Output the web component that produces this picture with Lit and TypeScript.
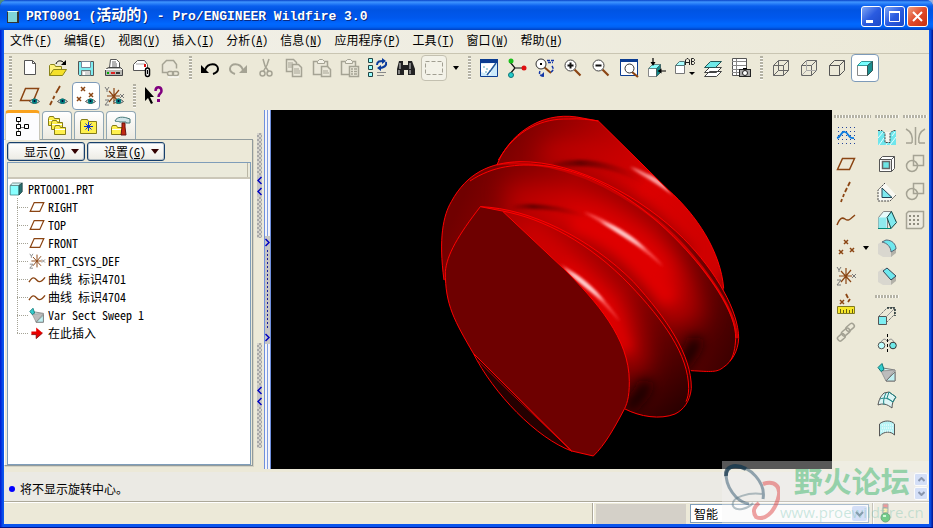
import { LitElement, html, svg, css, TemplateResult, SVGTemplateResult } from "lit";
import { customElement, state } from "lit/decorators.js";
import { classMap } from "lit/directives/class-map.js";

type Tool = { id: string; label: string; off?: boolean };

const B = "#8b4513";
const G = "#a5a394";
const K = "#555";

const eye = svg`<path d="M9.5 15.5q5-5 10 0q-5 4-10 0z" fill="#dfe8e8" stroke="#555"/><circle cx="14.5" cy="15.2" r="2.6" fill="#008080"/><circle cx="14.5" cy="15" r="1" fill="#003"/>`;
const cube = (c: string) => svg`<path d="M2.500 7.500h10v10h-10zM2.500 7.500l5-5h10l-5 5M17.500 2.500v10l-5 5" fill="none" stroke="${c}"/>`;
const axes = (c: string) => svg`<path d="M10 2v16M3 10h13M5 5l10 11M15 4L5 16" stroke="${c}" stroke-width="1.200" fill="none"/><path d="M1 1l2 3 2-3M3 4v2M16 8l4 4m0-4l-4 4M1 14h4l-4 5h4" stroke="#777" fill="none"/>`;
const cross = (x: number, y: number, c = B) => svg`<path d="M${x - 2} ${y - 2}l4 4m0-4l-4 4" stroke="${c}" stroke-width="1.500" fill="none"/>`;
const folder = (x: number, y: number) => svg`<path d="M${x}.5 ${y}.5v-7l1-2h4l1 2h5v7z" fill="#fff04d" stroke="#857c18"/><path d="M${x + 1} ${y - 5}.5h10" stroke="#fff"/>`;
const magnifier = (sign: string) => svg`<path d="M11.500 11.500l6 6" stroke="#8b4513" stroke-width="2.200"/><circle cx="7.500" cy="7.500" r="5.500" fill="#fff" stroke="#444"/><path d="${sign}" stroke="#111" stroke-width="2"/>`;
const clip = svg`<path d="M1.500 3.500h14v13h-14z" fill="#ebe8da" stroke="${G}" stroke-width="1.500"/><path d="M5.500 5.500v-2l2-2h3l2 2v2z" fill="#f4f2e8" stroke="${G}"/>`;

const icons: Record<string, SVGTemplateResult> = {
  new: svg`<path d="M4.500 2.500h8l3 3v11h-11z" fill="#fff" stroke="${K}"/><path d="M12.500 2.500v3h3" fill="none" stroke="${K}"/>`,
  open: svg`<path d="M1.500 17.500v-10l1-1h4l1 2h6v4" fill="#fff27a" stroke="#8a8418"/><path d="M1.500 17.500l4-6h13l-4 6z" fill="#f5e02a" stroke="#8a8418"/><path d="M8 6c1-4 6-4 8-1" stroke="#000" fill="none"/><path d="M18 2v5h-5z"/>`,
  save: svg`<path d="M2.500 3.500h15v14h-14l-1-1z" fill="#7eeef2" stroke="${K}"/><path d="M5.500 3.500h9v6h-9z" fill="#fff" stroke="#789"/><path d="M5.500 12.500h9v5h-9z" fill="#d4d4d4" stroke="#677"/><path d="M7 14h2v3H7z" fill="#fff"/>`,
  print: svg`<path d="M5.500 9.500l1-8h6l3 3v5z" fill="#fff" stroke="${K}"/><path d="M8 4h4M8 6h5M8 8h5" stroke="#666"/><path d="M1.500 11.500l3-2h12l2 2v6h-17z" fill="#b9b9b4" stroke="#444"/><path d="M1 11.500h17" stroke="#fff"/><path d="M3 14h2v2H3z" fill="#0a0"/><path d="M7 14h4v2H7z" fill="#d22"/><path d="M12 14h4v2h-4z" fill="#333"/>`,
  mail: svg`<path d="M1.500 12.500v-6l4-4h7l3 4v6z" fill="#fff" stroke="#555"/><path d="M4 6h9" stroke="#aaa"/><path d="M12 6h2v3h-2z" fill="#d11"/><rect x="13.500" y="10" width="4" height="8.500" rx="2" fill="#fff" stroke="#000" stroke-width="1.500"/><path d="M15.500 12v4" stroke="#000"/>`,
  maillink: svg`<path d="M7 14.500H2.500v-8l4-4h7l3 4v4" fill="#ebe8da" stroke="${G}" stroke-width="1.500"/><rect x="7.500" y="13.500" width="6" height="4" rx="2" fill="none" stroke="${G}" stroke-width="1.500"/><rect x="12.500" y="13.500" width="6" height="4" rx="2" fill="none" stroke="${G}" stroke-width="1.500"/><path d="M8 19h11" stroke="#fff"/>`,
  undo: svg`<path d="M5 12c3-8 13-7 13-1c0 2-2 4-5 5" fill="none" stroke="#000" stroke-width="2"/><path d="M1 7v8h8z"/>`,
  redo: svg`<path d="M15 12C12 4 2 5 2 11c0 2 2 4 5 5" fill="none" stroke="${G}" stroke-width="2"/><path d="M19 7v8h-8z" fill="${G}"/>`,
  cut: svg`<path d="M7 1l2 7 4 6M13 1l-2 6-4 7" stroke="${G}" stroke-width="1.500" fill="none"/><circle cx="6.500" cy="15.500" r="2.500" fill="none" stroke="${G}" stroke-width="1.500"/><circle cx="13.500" cy="15.500" r="2.500" fill="none" stroke="${G}" stroke-width="1.500"/>`,
  copy: svg`<path d="M2.500 1.500h7l3 3v9h-10z" fill="#ebe8da" stroke="${G}" stroke-width="1.500"/><path d="M4 5h5M4 7h6M4 9h4" stroke="${G}"/><path d="M8.500 6.500h6l3 3v9h-9z" fill="#ebe8da" stroke="${G}" stroke-width="1.500"/><path d="M10 11h5M10 13h6M10 15h6" stroke="${G}"/>`,
  paste: svg`${clip}<path d="M9.500 8.500h6l3 3v7h-9z" fill="#ebe8da" stroke="${G}" stroke-width="1.500"/><path d="M11 13h5M11 15h6" stroke="${G}"/>`,
  pastespecial: svg`${clip}<path d="M9.500 8.500h9v10h-9z" fill="#ebe8da" stroke="${G}" stroke-width="1.500"/><path d="M11 11h2M14 11h3M11 13.500h2M14 13.500h3M11 16h2M14 16h3" stroke="${G}" stroke-width="1.500"/>`,
  regen: svg`<path d="M.5.500h4v4h-4zM.5 7.500h4v4h-4zM.5 14.500h4v4h-4z" fill="#9ff" stroke="#244"/><path d="M9 7c0-4 3-4 6-4M18 4c1 4-2 5-5 6" stroke="#0a3b9c" stroke-width="2" fill="none"/><path d="M14 0l4 3-4 3zM13 7v6l-4-3z" fill="#0a3b9c"/><path d="M9 14.500h9M9 17.500h7" stroke="#888"/>`,
  find: svg`<path d="M3 3h4v4h5V3h4l3 8v6h-7v-5H8v5H1v-6z" fill="#222"/><path d="M4 5v6M14 5v6M3 12v4M14 12v4" stroke="#ddd"/>`,
  select: svg`<path d="M1.500 3.500h17v13h-17z" fill="none" stroke="#a19f92" stroke-dasharray="4 2"/>`,
  repaint: svg`<path d="M1.500 1.500h17v17h-17z" fill="#cdebfb" stroke="#0b3c91"/><path d="M1 1h18v4H1z" fill="#0b3c91"/><path d="M2 6l14-1-5 12-9-3z" fill="#fff"/><path d="M4 9h2M7 11h2M6 14h2M10 13h2" stroke="#5ab"/><path d="M8 17l4-5 5-7" stroke="#245a9c" stroke-width="1.500" fill="none"/>`,
  spin: svg`<path d="M3 4l5 6-5 6M8 10h9" fill="none" stroke="#111" stroke-width="1.200"/><circle cx="4" cy="3" r="2.500" fill="#1bbf1b"/><circle cx="4" cy="17" r="2.500" fill="#2cc" stroke="#177"/><circle cx="17" cy="10" r="2.500" fill="#e01010"/>`,
  orientmode: svg`<path d="M9 9l7 6" stroke="${B}" stroke-width="2"/><circle cx="6" cy="6" r="5" fill="#fff" stroke="#333"/><path d="M5 5h2v2H5z"/><path d="M12 2.500h7M13 4.500h5M5 13c-2 4 2 5 4 5M17 8c2 3 1 5-1 6" stroke="#1236a8" stroke-width="1.500" fill="none" stroke-dasharray="3 1"/><path d="M9 14v5l-4-1z" fill="#1236a8"/>`,
  zoomin: magnifier("M4.500 7.500h6M7.500 4.500v6"),
  zoomout: magnifier("M4.500 7.500h6"),
  refit: svg`<path d="M1.500 1.500h17v16h-17z" fill="#fff" stroke="#0b3c91"/><path d="M1 1h18v3H1z" fill="#0b3c91"/><path d="M13 14l6 5" stroke="${B}" stroke-width="2.200"/><circle cx="10.500" cy="10.500" r="4.500" fill="#fff" stroke="#333"/>`,
  orient: svg`<path d="M1.500 10.500h8v8h-8z" fill="#fff" stroke="#888"/><path d="M1.500 10.500l4-4h8l-4 4z" fill="#8ff" stroke="#688"/><path d="M9.500 10.500l4-4v8l-4 4z" fill="#188" stroke="#466"/><path d="M6 0v6M19 13h-6" stroke="#000" stroke-width="1.200"/><path d="M3.500 4h5L6 8zM14.500 10.500v5l-4-2.500z"/>`,
  views: svg`<path d="M.5 7.500h9v8h-9z" fill="#fff" stroke="#777"/><path d="M.5 7.500l4-4h5v4z" fill="#aff" stroke="#577"/><path d="M10.500 7V2l1.500-1.500h1L14.500 2v5M10.500 4.500h4M16.500.500v6h2l1-1v-1l-1-1h-2M16.500.500h2l1 1v1l-1 1" stroke="#222" fill="none"/><path d="M14 14h6l-3 3z"/>`,
  layers: svg`<path d="M1.500 18.500l5-5h12l-5 5zM1.500 14.500l5-5h12l-5 5z" fill="#fff" stroke="#444"/><path d="M1.500 9.500l6-6h11l-6 6z" fill="#6ee8e8" stroke="#255"/>`,
  viewmgr: svg`<path d="M1.500.500h14v17h-14z" fill="#fff" stroke="#555"/><path d="M1 3.500h14M1 7.500h14M1 11.500h8M1 14.500h7M5.500 1v16" stroke="#888"/><rect x="8.500" y="11.500" width="11" height="7" fill="#aaa" stroke="#222"/><circle cx="14" cy="15" r="2.500" fill="#fff" stroke="#222"/><path d="M12 10h4v1h-4z"/>`,
  wire: svg`${cube("#666")}<path d="M7.500 2.500v10h10M2.500 17.500l5-5" fill="none" stroke="#666"/>`,
  hidden: svg`${cube("#666")}<path d="M7.500 2.500v10h10M2.500 17.500l5-5" fill="none" stroke="#aaa"/>`,
  nohidden: cube("#555"),
  shaded: svg`<path d="M2.500 7.500h10v10h-10z" fill="#fff" stroke="#888"/><path d="M2.500 7.500l4-4h11l-5 4z" fill="#7ff" stroke="#399"/><path d="M12.500 7.500l5-4v9l-5 5z" fill="#1a8f8f" stroke="#355"/>`,
  planeEye: svg`<path d="M5.500 2.500h13l-5 12h-13z" fill="none" stroke="${B}" stroke-width="1.500"/>${eye}`,
  axisEye: svg`<path d="M12 0L8 7M6.500 10L5 13M4 15l-2 4" fill="none" stroke="${B}" stroke-width="1.800"/>${eye}`,
  pointEye: svg`${cross(7, 3)}${cross(15, 9)}${cross(3, 13)}${eye}`,
  csysEye: svg`${axes(B)}${eye}`,
  help: svg`<path d="M1 1v14l3-3 3 6 2-1-3-6h4z"/><path d="M11.500 5c0-5 6-5 6 0c0 3-3 2-3 6" fill="none" stroke="#800080" stroke-width="2.500"/><path d="M13 13h3v3h-3z" fill="#800080"/>`,
  modeltree: svg`<path d="M5.500 4v12M5 10.500h8" stroke="#777"/><path d="M3.500.500h4v4h-4zM3.500 7.500h4v4h-4zM3.500 14.500h4v4h-4zM11.500 7.500h4v4h-4z" fill="#fff" stroke="#000"/>`,
  folders: svg`${folder(1, 9)}${folder(4, 13)}${folder(7, 18)}`,
  favorite: svg`<path d="M1.500 17.500v-12l1-2h6l1 2h8v12z" fill="#fff04d" stroke="#857c18"/><path d="M9.500 6v9M5 10.500h9M6.500 7.500l6 6m0-6l-6 6" stroke="#0a2fd0"/>`,
  tools: svg`${folder(0, 18)}<path d="M4 5c2-5 9-4 12-3l3 1v4h-4v-1H9c-2-1-3 0-5-1z" fill="#cfe4e8" stroke="#477"/><path d="M11 7h3v4l1 8h-5l1-8z" fill="#c32a12" stroke="#611"/>`,
  root: svg`<path d="M1.500 5.500h11v12h-11z" fill="#8ff" stroke="#488"/><path d="M1.500 5.500l3-3h12l-4 3z" fill="#dff" stroke="#577"/><path d="M12.500 5.500l4-3v11l-4 4z" fill="#276f70" stroke="#244"/>`,
  plane: svg`<path d="M6.500 4.500h12l-5 11h-12z" fill="none" stroke="${B}" stroke-width="1.500"/>`,
  csys: axes(B),
  curve: svg`<path d="M0 14c6-11 9-2 12-1c2 1 5-1 8-5" fill="none" stroke="${B}" stroke-width="1.800"/>`,
  sweep: svg`<path d="M6 6l12 2v11H9z" fill="#d9f4f4" stroke="#777"/><path d="M4 9l5 10 9-11z" fill="#bcbcbc" stroke="#999"/><path d="M9 19l9-9v9z" fill="#bff0f2" stroke="#777"/><path d="M1 5.500l4-4 2 6-3 2z" fill="#3cc" stroke="#177"/>`,
  insert: svg`<path d="M3 8h6V3l8 7-8 7v-5H3z" fill="#e80000"/><path d="M3 12h6v5l8-7" fill="none" stroke="#700"/>`,
  sketch: svg`<path d="M2 1.500h18M2 5.500h18M2 9.500h18M2 13.500h18M2 17.500h18" stroke="#24459b" stroke-dasharray="1 3"/><path d="M1 12c5-1 4-8 8-6c4 1 3 7 9 6" stroke="#0a7be0" stroke-width="1.800" fill="none"/>`,
  axis: svg`<path d="M14 0l-2 4M11 6L9 10M8 12l-1 3M6 17l-1 3" stroke="${B}" stroke-width="1.800" fill="none"/>`,
  bigcurve: svg`<path d="M1 15c3-7 5-8 8-6c4 3 6-1 10-4" fill="none" stroke="${B}" stroke-width="1.500"/>`,
  points: svg`${cross(10, 4)}${cross(5, 14)}${cross(16, 12)}`,
  measure: svg`${cross(6, 8)}<path d="M10 0l2 4M14 5l-2 3" stroke="${B}" stroke-width="1.800"/><path d="M1.500 12.500h17v7h-17z" fill="#f8e82a" stroke="#827a20"/><path d="M4.500 15v4M7.500 16v3M10.500 15v4M13.500 16v3M16.500 15v4" stroke="#665f10"/>`,
  chain: svg`<g fill="none" stroke="#a3a193" stroke-width="1.500"><rect x="10" y="3" width="9" height="5" rx="2" transform="rotate(-40 14 6)"/><rect x="5" y="8" width="9" height="5" rx="2" transform="rotate(-40 9 10)"/><rect x="1" y="13" width="8" height="5" rx="2" transform="rotate(-40 5 15)"/></g>`,
  hole: svg`<path d="M1 5h5l2 2v9h5V7l2-2h4v14H1z" fill="#6fe6ec"/><path d="M8 6h5v10H8z" fill="#f6f5ee"/><path d="M2 19l5-7M1 12l5-6M13 19l6-8M9 19l2-3M15 10l3-4" stroke="#e5ffff"/><path d="M1 4.500h4l3 3v9h5v-9l3-3h3" fill="none" stroke="#444" stroke-dasharray="2 1"/>`,
  shell: svg`<path d="M2.500 5.500l3-3h12v12l-3 3h-12z" fill="#fff" stroke="#555"/><path d="M14.500 5.500v12M2.500 5.500h12l3-3" fill="none" stroke="#555"/><path d="M5.500 7.500h7v7h-7z" fill="#6ee5e5" stroke="#666" stroke-width="1.500"/>`,
  rib: svg`<path d="M8 1L1 8v11h12l6-6" fill="#f8f8f2" stroke="#444" stroke-dasharray="2 1"/><path d="M5 6v9.500h10z" fill="#7de9ee" stroke="#245"/>`,
  draft: svg`<path d="M1.500 7.500l5-6h8l-4 6v11h-9z" fill="#e6fafa" stroke="#888"/><path d="M1.500 7.500h8v11h-8z" fill="#8feaee"/><path d="M14 18.500L10 7.500l4.500-6 5 11z" fill="#7fe9ee" stroke="#144"/><path d="M1 18.500h13" stroke="#087"/>`,
  round: svg`<path d="M1 6l5-3 5 5 4 4v7H6l-5-3z" fill="#d9d7cf"/><path d="M14 12l5-3v6l-5 4z" fill="#b3b1a8"/><path d="M5 4l4-2c6 0 10 4 10 9l-5 3C14 9 10 5 5 4z" fill="#6ee8ee" stroke="#567"/>`,
  chamfer: svg`<path d="M1 6l5-4 5 7 3 4v6H6l-5-3z" fill="#d9d7cf"/><path d="M14 13l5-4v6l-5 4z" fill="#b3b1a8"/><path d="M6 5l4-3 9 8-5 4z" fill="#6ee8ee" stroke="#345"/>`,
  extrude: svg`<path d="M1.500 10.500h8v8h-8z" fill="#7eeef2" stroke="#555"/><path d="M1.500 10.500l9-9h7v7l-8 8" fill="none" stroke="#777" stroke-dasharray="3 1"/><path d="M10 2h8v8" fill="none" stroke="#233" stroke-width="1.500" stroke-dasharray="2 1"/><path d="M9.500 10.500l8-8" stroke="#999"/>`,
  revolve: svg`<path d="M10.500 0v20" stroke="#000" stroke-dasharray="3 2"/><circle cx="4.500" cy="11.500" r="3.300" fill="#bff" stroke="#555"/><circle cx="16" cy="11.500" r="3.300" fill="#6ee8e8" stroke="#333"/><path d="M4 8c2-3 4-4 6-1M17 8c-2-3-3-4-6-1" fill="none" stroke="#888"/>`,
  boundary: svg`<path d="M1 15c1-6 3-9 6-12l5-1 7 5c-3 3-4 7-4 11-5-4-9-5-14-3z" fill="#ddf5f5" stroke="#555"/><path d="M3 9c5-2 9 0 13 3M9 3c-2 4-3 8-2 12M12 2l7 5-3 5-6-4z" fill="none" stroke="#288"/>`,
  style: svg`<path d="M2.500 6c4-4 12-4 15 0v11c-4-4-10-4-15 1z" fill="#b8f4f6" stroke="#555"/><path d="M5 7h11M5 10h11M4 13h12" stroke="#fff" stroke-dasharray="1 1"/>`,
  mirror: svg`<path d="M10.500 1v18M1 3c6 3 7 8 6 14M20 3c-6 3-7 8-6 14M1 17h6M14 17h6" stroke="${G}" fill="none" stroke-width="1.500"/>`,
  merge: svg`<path d="M8.500 1.500h10v10h-10z" fill="none" stroke="${G}" stroke-width="1.500"/><circle cx="7" cy="12" r="5.500" fill="none" stroke="${G}" stroke-width="1.500"/>`,
  pattern: svg`<path d="M1.500 3.500l2-2h15v15l-2 2h-15z" fill="#edeade" stroke="${G}" stroke-width="1.500"/><path d="M4 6h11M4 10h11M4 14h11" stroke="#8f8d80" stroke-width="2" stroke-dasharray="2 2"/>`,
};

const icon = (id: string): TemplateResult => html`<svg class="icon" viewBox="0 0 20 20" aria-hidden="true">${icons[id]}</svg>`;

const menus: [string, string][] = [
  ["文件", "F"], ["编辑", "E"], ["视图", "V"], ["插入", "I"], ["分析", "A"],
  ["信息", "N"], ["应用程序", "P"], ["工具", "T"], ["窗口", "W"], ["帮助", "H"],
];

const t = (id: string, label: string, off = false): Tool => ({ id, label, off });

const fileTools = [t("new", "新建"), t("open", "打开"), t("save", "保存"), t("print", "打印"), t("mail", "发送邮件"), t("maillink", "发送链接", true)];
const editTools = [t("undo", "撤消"), t("redo", "重做", true), t("cut", "剪切", true), t("copy", "复制", true), t("paste", "粘贴", true), t("pastespecial", "选择性粘贴", true), t("regen", "再生"), t("find", "查找")];
const viewTools = [t("repaint", "重画"), t("spin", "旋转中心"), t("orientmode", "定向模式"), t("zoomin", "放大"), t("zoomout", "缩小"), t("refit", "重新调整"), t("orient", "重定向"), t("views", "视图列表"), t("layers", "层"), t("viewmgr", "视图管理器")];
const displayTools = [t("wire", "线框"), t("hidden", "隐藏线"), t("nohidden", "无隐藏线"), t("shaded", "着色")];
const datumDisplay = [t("planeEye", "平面显示"), t("axisEye", "轴显示"), t("pointEye", "点显示"), t("csysEye", "坐标系显示")];
const datumTools = [t("sketch", "草绘"), t("plane", "基准平面"), t("axis", "基准轴"), t("bigcurve", "基准曲线"), t("points", "基准点"), t("csys", "坐标系"), t("measure", "分析"), t("chain", "参照", true)];
const engTools = [t("hole", "孔"), t("shell", "壳"), t("rib", "筋"), t("draft", "拔模"), t("round", "倒圆角"), t("chamfer", "倒角")];
const shapeTools = [t("extrude", "拉伸"), t("revolve", "旋转"), t("sweep", "可变剖面扫描"), t("boundary", "边界混合"), t("style", "造型")];
const changeTools = [t("mirror", "镜像", true), t("merge", "合并", true), t("merge", "修剪", true), t("pattern", "阵列", true)];
const tabs = [t("modeltree", "模型树"), t("folders", "文件夹浏览器"), t("favorite", "收藏夹"), t("tools", "连接")];

const features: [string, string][] = [
  ["plane", "RIGHT"], ["plane", "TOP"], ["plane", "FRONT"], ["csys", "PRT_CSYS_DEF"],
  ["curve", "曲线 标识4701"], ["curve", "曲线 标识4704"], ["sweep", "Var Sect Sweep 1"], ["insert", "在此插入"],
];

const backShape = "M200 182C235 90 330 20 440 36L505 48L715 255C800 330 872 440 881 550L860 720L500 500Z";
const middleShape = "M42 525C25 400 40 330 64 290C110 205 180 172 270 170C440 168 640 280 760 400C860 500 926 620 926 700C924 740 905 770 880 787C860 803 845 800 783 797L500 800Z";
const frontShape = "M151 305C300 310 480 400 610 530C710 640 785 750 784 850C780 890 760 915 735 927C690 945 630 935 585 912L300 700Z";
const faceShape = "M151 305L217 318L400 490C500 590 598 700 598 830C598 880 590 900 580 918C555 965 525 1020 490 1053L425 1038L130 745C75 650 45 600 46 500C50 450 85 390 151 305Z";

@customElement("app-root")
export class AppRoot extends LitElement {
  @state() private tab = "modeltree";
  @state() private display = "shaded";

  static styles = css`
    :host {
      display: block;
      font: 12px/18px "Noto Sans CJK SC", sans-serif;
      font-feature-settings: "hwid";
      color: #000;
      background: linear-gradient(90deg, #4f8c7c 50%, #9ab0e0 50%);
    }
    * { box-sizing: border-box; }
    button, select { font: inherit; font-feature-settings: inherit; color: inherit; }
    button { border: 0; background: none; padding: 0; white-space: nowrap; }
    ul { list-style: none; margin: 0; padding: 0; }
    .window {
      position: relative;
      min-height: 100vh;
      display: flex;
      flex-direction: column;
      border-radius: 7px 7px 0 0;
      overflow: hidden;
      background: linear-gradient(90deg, #0019cf, #0a55ee 3px, #0a55ee calc(100% - 3px), #00138c);
      border-bottom: 1px solid #00138c;
      padding: 0 4px 3px;
    }
    .title {
      display: flex;
      align-items: center;
      height: 30px;
      margin: 0 -4px;
      padding: 3px 5px 0 7px;
      gap: 2px;
      background: linear-gradient(#0842c8, #3f95ff 2px, #0a5fee 6px, #0054e3 10px, #0058ee 18px, #0068ff 24px, #0062f5 27px, #0040c0);
    }
    .title h1 {
      flex: 1;
      margin: 0;
      font: bold 13px/20px "Liberation Mono", "Noto Sans CJK SC", monospace;
      color: #fff;
      text-shadow: 1px 1px #0a2a80;
      white-space: nowrap;
    }
    .title .han { font-size: 15px; }
    .appicon { width: 12px; height: 12px; margin-right: 5px; background: #7fd4d8; border: 1px solid #333; border-right-width: 2px; border-top-color: #dff; }
    .cap { width: 21px; height: 21px; border: 1px solid #fff; border-radius: 3px; background: linear-gradient(135deg, #7fa6f5, #2a5be0 50%, #1c49c8); }
    .cap.close { background: linear-gradient(135deg, #f0a080, #e0492a 50%, #c83010); }
    .cap svg { display: block; width: 19px; height: 19px; }
    .menubar {
      display: flex;
      gap: 12px;
      height: 24px;
      padding: 1px 6px 4px;
      border-bottom: 1px solid #c9c5b2;
      background: linear-gradient(90deg, #f2f1ea, #ece9d8);
    }
    .bars { background: #ece9d8; }
    .bar { display: flex; height: 28px; align-items: center; }
    .grip { width: 12px; height: 24px; display: flex; justify-content: center; }
    .grip::before { content: ""; width: 3px; background: repeating-linear-gradient(#b4b2a4 0 2px, #fbfaf5 2px 3px); }
    .grip.wide { width: auto; height: 12px; align-items: center; margin: 0 2px; }
    .grip.wide::before { width: 100%; height: 3px; background: repeating-linear-gradient(90deg, #b4b2a4 0 2px, #fbfaf5 2px 3px); }
    .tool { width: 28px; height: 28px; display: grid; place-items: center; border-radius: 4px; border: 1px solid transparent; }
    .tool.on { background: #fff; border-color: #7d9ab8; }
    .tool.pick { width: 26px; height: 26px; margin: 0 1px; background: #f3f2e8; border-color: #c3c0b0; }
    .icon { width: 20px; height: 20px; display: block; overflow: visible; }
    .more { width: 15px; height: 28px; display: grid; place-items: center; }
    .more::before, .drop::after { content: ""; border: 3px solid transparent; border-top: 4px solid #000; border-bottom: 0; }
    .main { flex: 1; display: flex; background: #ece9d8; }
    .side { width: 249px; display: flex; flex-direction: column; }
    .tabs { display: flex; gap: 2px; height: 30px; align-items: flex-end; padding-left: 1px; position: relative; }
    .tab { width: 30px; height: 28px; display: grid; place-items: center; border: 1px solid #91a7b4; border-bottom: 0; border-radius: 4px 4px 0 0; background: linear-gradient(#fff, #eceae0); margin-bottom: 1px; }
    .tab.on { width: 35px; height: 30px; background: #fcfcfe; border-color: #c9c7ba; border-top: 3px solid #f9a21e; margin-bottom: 0; }
    .panel { flex: 1; display: flex; flex-direction: column; border: 1px solid #919b9c; border-left-color: #fff; padding: 2px 1px 0 2px; margin: -1px 0 3px; box-shadow: 1px 1px #d5d2c3; }
    .actions { display: flex; gap: 2px; padding-bottom: 1px; }
    .drop { width: 78px; height: 19px; display: flex; align-items: center; justify-content: flex-end; gap: 5px; padding: 0 5px; border: 1px solid #173f6b; outline: 1px solid #173f6b40; outline-offset: -2px; border-radius: 3px; background: linear-gradient(#fff, #ecebe4); }
    .drop::after { border-width: 4px; border-top-width: 5px; border-bottom-width: 0; border-top-color: #300; }
    .treebox { flex: 1; border: 1px solid #7f9db9; background: #fff; }
    .treehead { height: 16px; background: #ebeadb; border-bottom: 2px solid #cbc7b8; box-shadow: inset -2px 0 #ebeadb, inset -3px 0 #b9b6a5; }
    .tree { padding: 1px; }
    .row { display: flex; align-items: center; height: 18px; white-space: pre; }
    .row .icon { width: 16px; height: 16px; margin-right: 3px; }
    .branch { margin-left: 8px; }
    .branch .row::before { content: ""; width: 12px; height: 1px; background: repeating-linear-gradient(90deg, #a5a396 0 1px, transparent 1px 2px); }
    .branch { background: repeating-linear-gradient(#a5a396 0 1px, #fff 1px 2px) 0 0 / 1px calc(100% - 9px) no-repeat; }
    .sash { width: 18px; display: flex; }
    .tracks { width: 11px; display: flex; flex-direction: column; justify-content: space-between; padding: 23px 2px 21px 4px; }
    .track { height: 105px; display: flex; flex-direction: column; align-items: center; justify-content: center; background: repeating-conic-gradient(#a9a9a9 0 25%, #d6d4cc 0 50%) 0 0 / 4px 4px; }
    .chev { width: 5px; height: 11px; display: block; background: #c5c5c5; }
    .rail { width: 7px; display: flex; flex-direction: column; justify-content: center; border: solid #6f8fdc; border-width: 0 1px; background: linear-gradient(90deg, #f3f4fa 2px, #7f9ce0 2px 3px, #f3f4fa 3px); }
    .knob { height: 108px; display: flex; flex-direction: column; align-items: center; background: #c5c5c5; padding: 1px 0; }
    .dots { flex: 1; width: 1px; margin: 2px 0; background: repeating-linear-gradient(#1a1a9a 0 2px, transparent 2px 4px); }
    .canvas { flex: 1; min-width: 0; background: #000; display: flex; }
    .canvas svg { width: 100%; flex: 1; min-height: 359px; margin: auto; }
    .right { width: 97px; display: flex; align-items: flex-start; }
    .col { width: 28px; }
    .col.first { width: 41px; }
    .cell { display: flex; }
    .cell .more { width: 12px; }
    .message { display: flex; align-items: center; justify-content: space-between; height: 33px; border-top: 3px solid #ece9d8; border-bottom: 1px solid #aca899; background: #ebeae4; padding: 4px 1px 0 5px; }
    .message p { margin: 0; display: flex; align-items: center; gap: 5px; }
    .message p::before { content: ""; width: 6px; height: 6px; border-radius: 50%; background: #00f; }
    .spin { display: flex; flex-direction: column; gap: 1px; margin-top: -4px; }
    .step { width: 14px; height: 13px; display: grid; place-items: center; border: 1px solid #fff; border-radius: 2px; background: #c3d3f9; }
    .step svg { width: 7px; height: 5px; }
    .status { display: flex; height: 22px; border-top: 1px solid #fff; background: #ece9d8; }
    .status .rest { flex: 1; }
    .divider { width: 2px; background: #aca899; border-right: 1px solid #fff; margin-right: 2px; }
    .gray { width: 90px; background: #d4d0c8; margin: 1px 4px 0 0; }
    .filter { position: relative; width: 179px; height: 19px; margin: 1px 3px 0 0; }
    .filter select { appearance: none; width: 100%; height: 19px; border: 1px solid #7f9db9; border-radius: 0; background: #fff; padding: 0 3px; display: block; }
    .filter .arrow { position: absolute; right: 2px; top: 2px; width: 15px; height: 15px; border-radius: 2px; background: #c3d3f9; display: grid; place-items: center; pointer-events: none; }
    .filter .arrow svg { width: 9px; height: 6px; }
    .lamp { width: 53px; padding-left: 2px; }
    .lamp svg { width: 14px; height: 20px; display: block; }
    .brand { position: absolute; right: 4px; bottom: 3px; width: 207px; height: 63px; background: rgba(245, 245, 245, .36); pointer-events: none; display: flex; }
    .brand svg { width: 58px; height: 63px; }
    .words { display: flex; flex-direction: column; align-items: center; gap: 3px; }
    .name { font: bold 29px/38px "Noto Sans CJK SC", sans-serif; color: rgba(72, 185, 115, .55); white-space: nowrap; }
    .site { font: 15px/20px "Open Sans", sans-serif; font-feature-settings: normal; color: rgba(110, 190, 170, .35); }
  `;

  private tool = (x: Tool, on = false) => html`<button class=${classMap({ tool: true, on })} aria-label=${x.label} ?disabled=${x.off}>${icon(x.id)}</button>`;

  private drop(label: string, key: string) {
    return html`<button class="drop"><span>${label}(<u>${key}</u>)</span></button>`;
  }

  private model() {
    return html`<svg viewBox="0 0 561 359" role="img" aria-label="PRT0001">
      <defs>
        <clipPath id="cb"><path d=${backShape} /></clipPath>
        <clipPath id="cm"><path d=${middleShape} /></clipPath>
        <clipPath id="cf"><path d=${frontShape} /></clipPath>
        <filter id="wide" filterUnits="userSpaceOnUse" x="-100" y="-100" width="1200" height="1300"><feGaussianBlur stdDeviation="32" /></filter>
        <filter id="soft" filterUnits="userSpaceOnUse" x="-100" y="-100" width="1200" height="1300"><feGaussianBlur stdDeviation="18" /></filter>
        <filter id="fine" filterUnits="userSpaceOnUse" x="-100" y="-100" width="1200" height="1300"><feGaussianBlur stdDeviation="4" /></filter>
        <linearGradient id="gb" gradientUnits="userSpaceOnUse" x1="210" y1="130" x2="800" y2="450">
          <stop offset="0" stop-color="#780000" /><stop offset=".35" stop-color="#b00000" /><stop offset=".65" stop-color="#dc0000" /><stop offset="1" stop-color="#d00000" />
        </linearGradient>
        <linearGradient id="gm" gradientUnits="userSpaceOnUse" x1="50" y1="380" x2="900" y2="780">
          <stop offset="0" stop-color="#700000" /><stop offset=".3" stop-color="#a40000" /><stop offset=".6" stop-color="#940000" /><stop offset="1" stop-color="#3c0000" />
        </linearGradient>
        <linearGradient id="bm" gradientUnits="userSpaceOnUse" x1="180" y1="290" x2="790" y2="680">
          <stop offset="0" stop-color="#a80000" /><stop offset=".35" stop-color="#d80000" /><stop offset=".75" stop-color="#e40000" /><stop offset="1" stop-color="#900000" />
        </linearGradient>
        <linearGradient id="gf" gradientUnits="userSpaceOnUse" x1="250" y1="340" x2="720" y2="930">
          <stop offset="0" stop-color="#b00000" /><stop offset=".5" stop-color="#960000" /><stop offset="1" stop-color="#2c0000" />
        </linearGradient>
        <linearGradient id="bf" gradientUnits="userSpaceOnUse" x1="280" y1="360" x2="640" y2="840">
          <stop offset="0" stop-color="#c80000" /><stop offset=".6" stop-color="#e40000" /><stop offset="1" stop-color="#800000" />
        </linearGradient>
        <linearGradient id="edge" gradientUnits="userSpaceOnUse" x1="240" y1="0" x2="470" y2="0">
          <stop offset="0" stop-color="#500000" stop-opacity="0" /><stop offset=".3" stop-color="#500000" stop-opacity=".8" /><stop offset="1" stop-color="#800000" stop-opacity="0" />
        </linearGradient>
        <linearGradient id="edge2" gradientUnits="userSpaceOnUse" x1="370" y1="0" x2="640" y2="0">
          <stop offset="0" stop-color="#500000" stop-opacity=".3" /><stop offset=".3" stop-color="#500000" stop-opacity=".8" /><stop offset="1" stop-color="#800000" stop-opacity="0" />
        </linearGradient>
      </defs>
      <g transform="translate(159 -5) scale(.333333)" fill="none" stroke-linejoin="round">
        <path d=${backShape} fill="url(#gb)" />
        <g clip-path="url(#cb)">
          <path d="M340 150C450 120 560 150 640 210" stroke="#cc0000" stroke-width="40" filter="url(#wide)" />
          <path d="M370 182C470 162 560 180 650 235" stroke="url(#edge2)" stroke-width="18" filter="url(#fine)" />
          <path d="M380 225C520 220 640 290 780 450" stroke="#a40000" stroke-width="40" filter="url(#soft)" />
          <path d="M600 185C650 200 700 235 730 272C690 240 640 215 600 185Z" fill="#ff9a9a" filter="url(#fine)" />
          <path d="M650 208C680 220 705 240 722 262C695 240 670 225 650 208Z" fill="#ffd0d0" filter="url(#fine)" />
          <path d="M890 500C880 600 870 660 830 720" stroke="#900000" stroke-width="30" filter="url(#soft)" />
        </g>
        <path d="M200 182C235 90 330 20 440 36L505 48L715 255C800 330 872 440 881 550" stroke="#f00" stroke-width="3" />
        <path d="M205 165C260 70 340 40 415 42C450 40 480 44 505 48" stroke="#f00" stroke-width="3" />

        <path d=${middleShape} fill="url(#gm)" />
        <g clip-path="url(#cm)">
          <path d="M230 300C400 280 560 360 650 450C715 515 755 590 765 660" stroke="url(#bm)" stroke-width="130" filter="url(#wide)" />
          <path d="M430 350C540 380 640 460 720 590" stroke="#e00000" stroke-width="50" filter="url(#soft)" />
          <path d="M240 307C330 297 400 310 470 335" stroke="url(#edge)" stroke-width="14" filter="url(#fine)" />
          <path d="M800 700C790 735 770 765 745 790" stroke="#140000" stroke-width="34" filter="url(#soft)" />
          <path d="M460 320C540 345 630 400 700 485C620 415 550 375 460 320Z" fill="#ff5c5c" filter="url(#fine)" />
          <path d="M510 347C570 367 615 400 650 437C600 404 560 382 510 347Z" fill="#ffdada" filter="url(#fine)" />
          <path d="M200 178C360 160 520 222 680 345C800 445 920 610 921 700" stroke="#c80000" stroke-width="7" />
        </g>
        <path d="M42 525C25 400 40 330 64 290C110 205 180 172 270 170C440 168 640 280 760 400C860 500 926 620 926 700C924 740 905 770 880 787C860 803 845 800 783 797" stroke="#f00" stroke-width="3" />
        <path d="M120 228C190 182 260 176 340 182C500 200 640 300 750 415C840 510 918 620 917 700C916 730 910 755 900 768" stroke="#f00" stroke-width="3" />

        <path d=${frontShape} fill="url(#gf)" />
        <g clip-path="url(#cf)">
          <path d="M270 360L430 500C540 600 595 680 615 800" stroke="url(#bf)" stroke-width="100" filter="url(#wide)" />
          <path d="M400 490C500 580 560 650 590 740" stroke="#e00000" stroke-width="40" filter="url(#soft)" />
          <path d="M650 830C642 862 620 890 590 910" stroke="#140000" stroke-width="32" filter="url(#soft)" />
          <path d="M390 478C450 510 510 560 570 650C510 580 460 540 390 478Z" fill="#ff5c5c" filter="url(#fine)" />
          <path d="M400 488C450 512 490 545 525 592C480 555 440 530 400 488Z" fill="#ffdada" filter="url(#fine)" />
        </g>
        <path d="M151 305C300 310 480 400 610 530C710 640 785 750 784 850C780 890 760 915 735 927C690 945 630 935 585 912" stroke="#f00" stroke-width="3" />
        <path d="M217 318C340 340 480 415 600 540C700 645 776 750 776 850C776 865 773 880 768 890" stroke="#f00" stroke-width="3" />

        <path d="M130 745C190 865 320 1000 425 1038Z" fill="#240000" stroke="#f00" stroke-width="3" />
        <path d=${faceShape} fill="#6e0000" stroke="#f00" stroke-width="3" />
        <path d="M145 768L240 862L425 1038" stroke="#f00" stroke-width="2" />
      </g>
    </svg>`;
  }

  render() {
    const chev = (d: string) => html`<svg class="chev" viewBox="0 0 5 11" aria-hidden="true"><path d=${d} fill="none" stroke="#0000c0" stroke-width="1.500" /></svg>`;
    return html`<div class="window">
      <header class="title">
        <span class="appicon"></span>
        <h1>PRT0001 (<span class="han">活动的</span>) - Pro/ENGINEER Wildfire 3.0</h1>
        <button class="cap" aria-label="最小化"><svg viewBox="0 0 19 19"><path d="M4 13h7v3H4z" fill="#fff" /></svg></button>
        <button class="cap" aria-label="最大化"><svg viewBox="0 0 19 19"><path d="M4.500 4.500h10v10h-10zM4 5.500h11" fill="none" stroke="#fff" /><path d="M4 4h11v2H4z" fill="#fff" /></svg></button>
        <button class="cap close" aria-label="关闭"><svg viewBox="0 0 19 19"><path d="M5 5l9 9m0-9l-9 9" stroke="#fff" stroke-width="2" /></svg></button>
      </header>
      <nav class="menubar">${menus.map(([name, key]) => html`<button>${name}(<u>${key}</u>)</button>`)}</nav>
      <div class="bars">
        <div class="bar" role="toolbar" aria-label="标准">
          <span class="grip"></span>${fileTools.map((x) => this.tool(x))}
          <span class="grip"></span>${editTools.map((x) => this.tool(x))}
          <button class="tool pick" aria-label="选取">${icon("select")}</button><button class="more" aria-label="选取选项"></button>
          <span class="grip"></span>${viewTools.map((x) => this.tool(x))}
          <span class="grip"></span>${displayTools.map((x) => html`<button class=${classMap({ tool: true, on: this.display === x.id })} aria-label=${x.label} @click=${() => (this.display = x.id)}>${icon(x.id)}</button>`)}
        </div>
        <div class="bar" role="toolbar" aria-label="基准显示">
          <span class="grip"></span>${datumDisplay.map((x) => this.tool(x, x.id === "pointEye"))}
          <span class="grip"></span>${this.tool(t("help", "上下文帮助"))}
        </div>
      </div>
      <div class="main">
        <aside class="side">
          <div class="tabs" role="tablist">
            ${tabs.map((x) => html`<button role="tab" aria-label=${x.label} aria-selected=${this.tab === x.id} class=${classMap({ tab: true, on: this.tab === x.id })} @click=${() => (this.tab = x.id)}>${icon(x.id)}</button>`)}
          </div>
          <section class="panel">
            <div class="actions">${this.drop("显示", "O")}${this.drop("设置", "G")}</div>
            <div class="treebox">
              <div class="treehead"></div>
              <div class="tree">
                <div class="row">${icon("root")}PRT0001.PRT</div>
                <ul class="branch">${features.map(([id, name]) => html`<li class="row">${icon(id)}${name}</li>`)}</ul>
              </div>
            </div>
          </section>
        </aside>
        <div class="sash">
          <div class="tracks">
            ${[0, 1].map(() => html`<div class="track">${chev("M4.500 2L1 5.500 4.500 9")}${chev("M4.500 2L1 5.500 4.500 9")}</div>`)}
          </div>
          <div class="rail"><div class="knob">${chev("M.5 2L4 5.500.5 9")}<span class="dots"></span>${chev("M.5 2L4 5.500.5 9")}</div></div>
        </div>
        <main class="canvas">${this.model()}</main>
        <aside class="right">
          <div class="col first"><div class="grip wide"></div>
            ${datumTools.map((x) => html`<div class="cell">${this.tool(x)}${x.id === "points" ? html`<button class="more" aria-label="基准点选项"></button>` : ""}</div>`)}
          </div>
          <div class="col"><div class="grip wide"></div>${engTools.map((x) => this.tool(x))}<div class="grip wide"></div>${shapeTools.map((x) => this.tool(x))}</div>
          <div class="col"><div class="grip wide"></div>${changeTools.map((x) => this.tool(x))}</div>
        </aside>
      </div>
      <div class="message">
        <p>将不显示旋转中心。</p>
        <div class="spin">
          <button class="step" aria-label="上一条"><svg viewBox="0 0 7 5"><path d="M.5 4L3.500 1l3 3" fill="none" stroke="#4d6185" stroke-width="2" /></svg></button>
          <button class="step" aria-label="下一条"><svg viewBox="0 0 7 5"><path d="M.5 1l3 3 3-3" fill="none" stroke="#4d6185" stroke-width="2" /></svg></button>
        </div>
      </div>
      <footer class="status">
        <span class="rest"></span><span class="divider"></span><span class="gray"></span>
        <label class="filter">
          <select aria-label="选取过滤器"><option>智能</option></select>
          <span class="arrow"><svg viewBox="0 0 9 6"><path d="M1 1l3.500 3.500L8 1" fill="none" stroke="#4d6185" stroke-width="2" /></svg></span>
        </label>
        <span class="divider"></span>
        <span class="lamp"><svg viewBox="0 0 14 20" aria-hidden="true"><path d="M5 1h5v4H5z" fill="#e66" stroke="#888" /><path d="M5 5h5v5H5z" fill="#ffef8a" stroke="#888" /><circle cx="7.500" cy="14.500" r="4.500" fill="#2cb84a" stroke="#2a7a3a" /><path d="M5 13h3" stroke="#bfffc5" stroke-width="2" /></svg></span>
      </footer>
      <div class="brand">
        <svg viewBox="0 0 58 63" aria-hidden="true" fill="none">
          <path d="M41 38C44 22 28 4 12 5C0 8 3 24 14 36C18 40 22 42 27 43" stroke="#2f556e" stroke-opacity=".5" stroke-width="3" />
          <path d="M4 15C3 6 12 2 24 8" stroke="#123348" stroke-opacity=".7" stroke-width="4" />
          <path d="M40 33C28 31 8 36 11 45C14 51 26 48 31 42" stroke="#5b7785" stroke-opacity=".45" stroke-width="2" />
          <path d="M41 23C53 19 60 26 56 38C52 52 42 60 34 56C30 50 32 46 37 42" stroke="#e04848" stroke-opacity=".5" stroke-width="4" />
        </svg>
        <div class="words"><span class="name">野火论坛</span><span class="site">www.proewildfire.cn</span></div>
      </div>
    </div>`;
  }
}
